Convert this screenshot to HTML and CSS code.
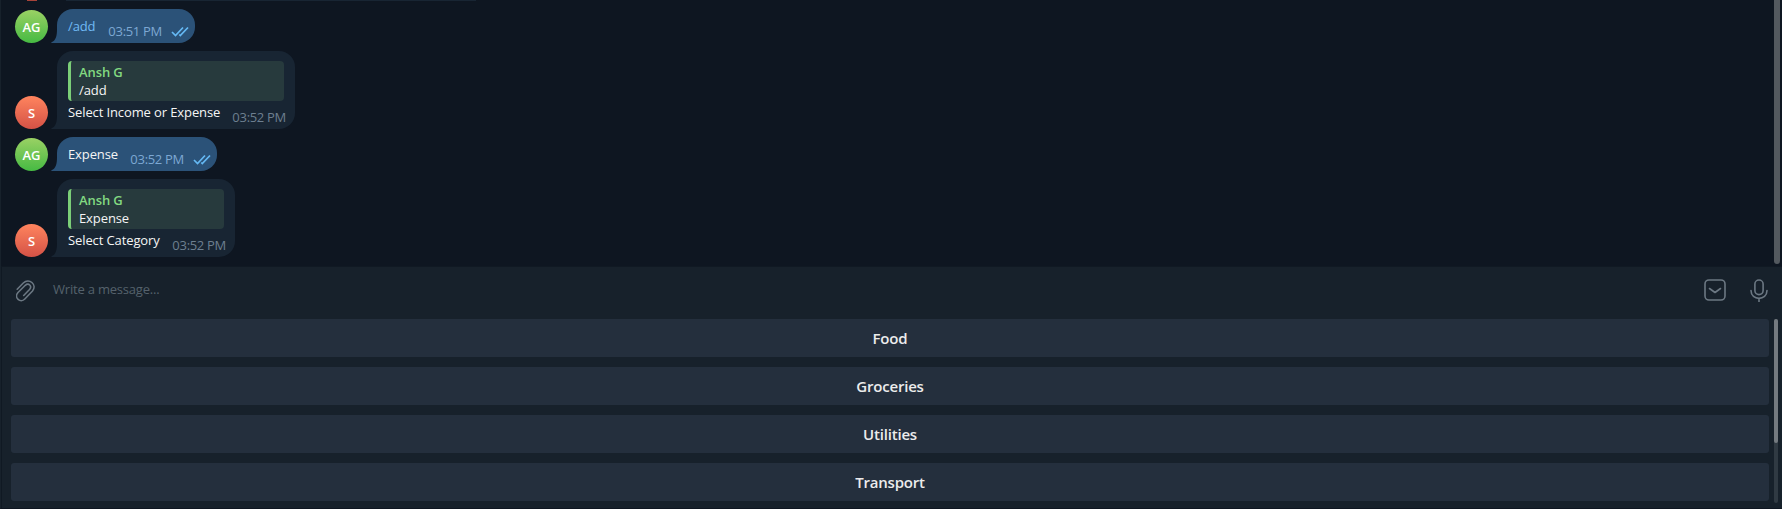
FILE: index.html
```
<!DOCTYPE html>
<html lang="en">
<head>
<meta charset="utf-8">
<title>Chat</title>
<link rel="stylesheet" href="styles.css">
</head>
<body>
<svg class="defs" width="0" height="0">
  <symbol id="tail" viewBox="0 0 12 14"><path d="M6 0C6 7 5 11.500 0.500 13.200C0 13.500 0.200 14 1 14H12V0Z"/></symbol>
  <symbol id="checks" viewBox="0 0 18 11"><path d="M1 6L4.500 9.500L12 1.500M8.300 8.500L9.300 9.500L17 1.500" fill="none" stroke="currentColor" stroke-width="1.700"/></symbol>
</svg>
<div class="app">
  <main class="history">
    <div class="previous"><span class="previous-avatar"></span><span class="previous-bubble"></span></div>
    <div class="row">
      <div class="avatar green">AG</div>
      <div class="bubble own w-add"><svg class="tail"><use href="#tail"/></svg><span class="text command">/add</span><span class="time">03:51 PM</span><svg class="checks"><use href="#checks"/></svg></div>
    </div>
    <div class="row">
      <div class="avatar red">S</div>
      <div class="bubble reply w-income"><svg class="tail"><use href="#tail"/></svg>
        <div class="quote"><b>Ansh G</b><span>/add</span></div>
        <div class="line"><span class="text">Select Income or Expense</span><span class="time">03:52 PM</span></div>
      </div>
    </div>
    <div class="row">
      <div class="avatar green">AG</div>
      <div class="bubble own w-expense"><svg class="tail"><use href="#tail"/></svg><span class="text">Expense</span><span class="time">03:52 PM</span><svg class="checks"><use href="#checks"/></svg></div>
    </div>
    <div class="row">
      <div class="avatar red">S</div>
      <div class="bubble reply w-category"><svg class="tail"><use href="#tail"/></svg>
        <div class="quote"><b>Ansh G</b><span>Expense</span></div>
        <div class="line"><span class="text">Select Category</span><span class="time">03:52 PM</span></div>
      </div>
    </div>
    <div class="history-scroll"></div>
  </main>
  <section class="composer">
    <svg class="clip" width="20" height="22" viewBox="0 0 20 22"><path d="M1.200 9.200L7.300 3C13 -2.500 21.500 4.500 16.500 11L8.800 19C4.500 23.500 -2.500 17.500 2 12.500L9.300 5.300C12.500 2.500 16.500 6 13.500 9.500L7.700 15.500"/></svg>
    <span class="placeholder">Write a message...</span>
    <svg class="toggle" width="22" height="22" viewBox="0 0 22 22"><rect x="1" y="1" width="20" height="20" rx="4"/><path d="M5.500 9.500L11 13.500L16.500 9.500"/></svg>
    <svg class="mic" width="18" height="23" viewBox="0 0 18 23"><rect x="4.900" y="1" width="8.200" height="14.600" rx="4.100"/><path d="M1 11.500C1 22 17 22 17 11.500M9 19.200V23"/></svg>
  </section>
  <section class="keyboard">
    <div class="keys">
      <div class="key">Food</div>
      <div class="key">Groceries</div>
      <div class="key">Utilities</div>
      <div class="key">Transport</div>
    </div>
    <div class="track"><div class="thumb"></div></div>
  </section>
</div>
</body>
</html>
```
FILE: styles.css
```
* { box-sizing: border-box; }
body { margin: 0; background: #17212b; font-family: "Open Sans", sans-serif; font-size: 13px; color: #f5f5f5; }
.defs { position: absolute; }
.app { height: 509px; border-left: 1px solid #17212b; border-bottom: 1px solid #0e1621; box-shadow: inset 1px 0 #101923; background: #17212b; overflow: hidden; }
.history { position: relative; height: 266px; background: #0e1621; display: flex; flex-direction: column; gap: 8px; }
.previous { height: 1px; display: flex; }
.previous-avatar { width: 10px; height: 1px; margin-left: 26px; background: #a84339; }
.previous-bubble { width: 410px; height: 1px; margin-left: 29px; background: #182533; }
.row { display: flex; align-items: flex-end; padding-left: 14px; gap: 9px; }
.avatar { width: 33px; height: 33px; border-radius: 50%; display: flex; align-items: center; justify-content: center; font-weight: 600; font-size: 13px; padding-top: 1px; color: #fff; }
.green { background: linear-gradient(#9ad164, #46ba43); }
.red { background: linear-gradient(#ff845e, #d45246); }
.bubble { position: relative; background: #182533; border-radius: 16px 16px 16px 0; }
.own { height: 34px; background: #2b5278; display: flex; padding: 8px 6px 0 11px; }
.reply { height: 78px; padding: 10px 11px 0; }
.w-add { width: 138px; }
.w-expense { width: 160px; }
.w-income { width: 238px; }
.w-category { width: 178px; }
.tail { position: absolute; left: -6px; bottom: 0; width: 12px; height: 14px; fill: #182533; }
.own .tail { fill: #2b5278; }
.text { line-height: 18px; white-space: nowrap; letter-spacing: -0.11px; }
.command { color: #70baf5; }
.time { margin-left: auto; line-height: 18px; padding-top: 5px; color: #6d7f8f; white-space: nowrap; letter-spacing: -0.3px; }
.own .time { color: #7da8d3; }
.checks { width: 18px; height: 11px; margin: 9px 0 0 9px; color: #65b9f4; }
.quote { height: 40px; border-left: 3px solid #7bcf78; border-radius: 4px; background: #273a3d; padding: 2px 8px; display: flex; flex-direction: column; line-height: 18px; letter-spacing: -0.1px; }
.quote b { font-weight: 600; color: #82d981; }
.line { display: flex; padding-top: 2px; margin-right: -2px; }
.history-scroll { position: absolute; right: 2px; top: 0; width: 6px; height: 264px; border-radius: 0 0 3px 3px; background: #53595f; }
.composer { height: 53px; border-top: 1px solid #101923; display: flex; padding: 0 14px 0 15px; }
.composer svg { fill: none; stroke: #6c7883; stroke-width: 1.6; stroke-linecap: round; stroke-linejoin: round; }
.clip { margin-top: 13px; }
.placeholder { margin: 13px auto 0 17px; line-height: 18px; color: #55616c; letter-spacing: -0.2px; }
.toggle { margin-top: 12px; }
.mic { margin: 12px 0 0 24px; }
.keyboard { display: flex; padding-left: 10px; }
.keys { width: 1758px; display: flex; flex-direction: column; gap: 10px; }
.key { height: 38px; border-radius: 3px; background: #242f3d; display: flex; align-items: center; justify-content: center; font-weight: 600; font-size: 15px; letter-spacing: -0.2px; padding-bottom: 1px; color: #ececec; }
.track { width: 4px; height: 184px; margin-left: 5px; border-radius: 2px; background: #303a43; }
.thumb { height: 124px; border-radius: 2px; background: #747a80; }
```
